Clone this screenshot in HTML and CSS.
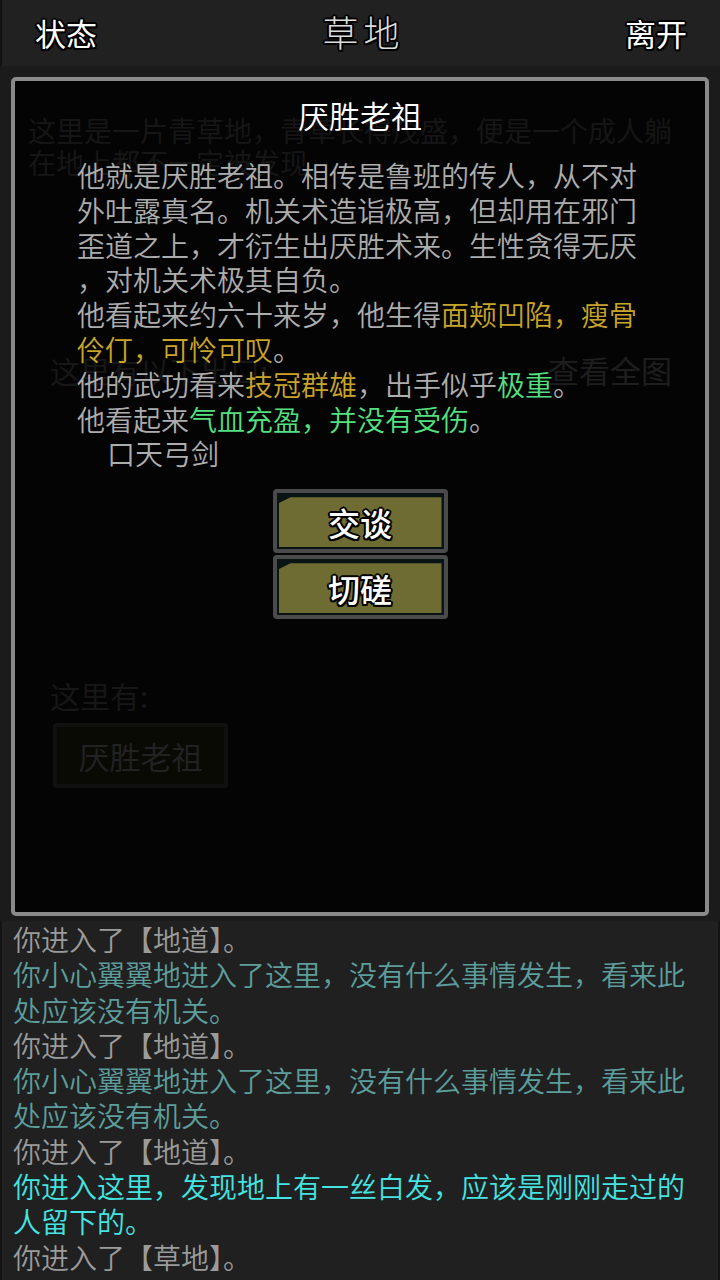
FILE: index.html
```html
<!DOCTYPE html>
<html lang="zh">
<head>
    <meta charset="UTF-8">
    <title>草地</title>
    <meta name="viewport" content="width=device-width, initial-scale=1.0">
    <link rel="stylesheet" href="styles.css">
</head>
<body>
    <div class="app">
        <header class="topbar">
            <span class="top-btn">状态</span>
            <span class="top-title">草地</span>
            <span class="top-btn">离开</span>
        </header>

        <main class="scene">
            <p class="scene-desc">这里是一片青草地，青草长得茂盛，便是一个成人躺在地上都不一定被发现</p>
            <div class="exits">
                <span>这里有以下出口:</span>
                <span class="map-link">查看全图</span>
            </div>
            <div class="npcs">
                <div class="npcs-label">这里有:</div>
                <div class="npc-btn"><span>厌胜老祖</span></div>
            </div>

            <!-- npc detail popup -->
            <div class="modal">
                <div class="modal-title">厌胜老祖</div>
                <div class="modal-body">
                    <p>他就是厌胜老祖。相传是鲁班的传人，从不对<br>外吐露真名。机关术造诣极高，但却用在邪门<br>歪道之上，才衍生出厌胜术来。生性贪得无厌<br>，对机关术极其自负。</p>
                    <p>他看起来约六十来岁，他生得<span class="gold">面颊凹陷，瘦骨伶仃，可怜可叹</span>。</p>
                    <p>他的武功看来<span class="gold">技冠群雄</span>，出手似乎<span class="green">极重</span>。</p>
                    <p>他看起来<span class="green">气血充盈，并没有受伤</span>。</p>
                    <p class="weapon">口天弓剑</p>
                </div>
                <div class="actions">
                    <div class="act-btn"><div class="act-face">交谈</div></div>
                    <div class="act-btn"><div class="act-face">切磋</div></div>
                </div>
            </div>
        </main>

        <section class="log">
            <div class="msg">你进入了【地道】。</div>
            <div class="msg teal">你小心翼翼地进入了这里，没有什么事情发生，看来此处应该没有机关。</div>
            <div class="msg">你进入了【地道】。</div>
            <div class="msg teal">你小心翼翼地进入了这里，没有什么事情发生，看来此处应该没有机关。</div>
            <div class="msg">你进入了【地道】。</div>
            <div class="msg cyan">你进入这里，发现地上有一丝白发，应该是刚刚走过的人留下的。</div>
            <div class="msg">你进入了【草地】。</div>
        </section>
    </div>
</body>
</html>
```

FILE: styles.css
```css
body {
    margin: 0;
    background: #141414;
    font-family: 'Noto Sans CJK SC', 'Noto Sans', sans-serif;
}
.app {
    width: 720px;
    height: 1280px;
    display: flex;
    flex-direction: column;
    overflow: hidden;
}
.topbar {
    height: 66px;
    flex: none;
    background: #212121;
    border-left: 2px solid #111;
    display: flex;
    justify-content: space-between;
    align-items: center;
    padding: 0 33px 0 33px;
    box-sizing: border-box;
}
.top-btn, .top-title {
    color: #fff;
    font-size: 31px;
    line-height: 40px;
    text-shadow: -2px 0 #000, 2px 0 #000, 0 -2px #000, 0 2px #000,
        -1.5px -1.5px #000, 1.5px 1.5px #000, -1.5px 1.5px #000, 1.5px -1.5px #000;
}
.top-title {
    color: #dcdcdc;
    font-size: 36px;
    font-weight: 300;
    letter-spacing: 5px;
    margin-right: -5px;
    margin-top: -4px;
}
.scene {
    flex: 1;
    position: relative;
    background: #1b1b1c;
    padding-top: 48px;
    box-sizing: border-box;
    font-weight: 350;
}
.scene-desc {
    margin: 0;
    padding: 0 40px 0 28px;
    font-size: 28px;
    line-height: 32px;
    color: #7a7a7a;
}
.exits {
    display: flex;
    justify-content: space-between;
    margin-top: 172px;
    padding: 0 48px 0 50px;
    font-size: 30px;
    line-height: 40px;
    color: #808080;
}
.map-link {
    font-size: 31px;
    color: #a8a8a8;
}
.npcs {
    margin-top: 285px;
    padding-left: 50px;
    color: #808080;
    font-size: 30px;
    line-height: 40px;
}
.npc-btn {
    width: 175px;
    height: 65px;
    margin-top: 8px;
    margin-left: 3px;
    box-sizing: border-box;
    border: 4px solid #5a5a5a;
    border-radius: 4px;
    background: #3a3920;
    padding: 3px;
    display: flex;
    justify-content: center;
    align-items: center;
    color: #bbb;
    font-size: 31px;
}
.modal {
    position: absolute;
    left: 11px;
    right: 11px;
    top: 11px;
    bottom: 5px;
    border: 4px solid #8a8a8a;
    border-radius: 5px;
    background: rgba(0, 0, 0, 0.82);
    padding-top: 14px;
}
.modal-title {
    text-align: center;
    color: #fff;
    font-size: 31px;
    line-height: 40px;
}
.modal-body {
    margin-top: 23px;
    padding-left: 62px;
    width: 562px;
    color: #adadad;
    font-size: 28px;
    line-height: 34.8px;
    line-break: anywhere;
}
.modal-body p {
    margin: 0;
}
.modal-body .weapon {
    padding-left: 30px;
}
.gold {
    color: #c9a42b;
}
.green {
    color: #55e07f;
}
.actions {
    margin-top: 18px;
    display: flex;
    flex-direction: column;
    align-items: center;
    gap: 2px;
}
.act-btn {
    width: 175px;
    height: 64px;
    box-sizing: border-box;
    border: 4px solid #4b4b4b;
    border-radius: 4px;
    background: #0b1414;
    padding: 4px 2px 2px 2px;
}
.act-face {
    height: 100%;
    background: #6e6c33;
    clip-path: polygon(0 6px, 12px 0, 100% 0, 100% 100%, 0 100%);
    display: flex;
    justify-content: center;
    align-items: center;
    color: #fff;
    font-size: 32px;
    font-weight: 500;
    text-shadow: -2px 0 #000, 2px 0 #000, 0 -2px #000, 0 2px #000,
        -1.5px -1.5px #000, 1.5px 1.5px #000, -1.5px 1.5px #000, 1.5px -1.5px #000;
}
.log {
    height: 359px;
    flex: none;
    background: #202020;
    border-left: 2px solid #141414;
    border-right: 2px solid #141414;
    padding: 1px 0 0 11px;
    box-sizing: border-box;
    font-size: 28px;
    font-weight: 350;
    line-height: 35.3px;
    color: #9b9b9b;
}
.msg {
    width: 680px;
}
.msg.teal {
    color: #5d9d9b;
}
.msg.cyan {
    color: #44e4e1;
}
```
